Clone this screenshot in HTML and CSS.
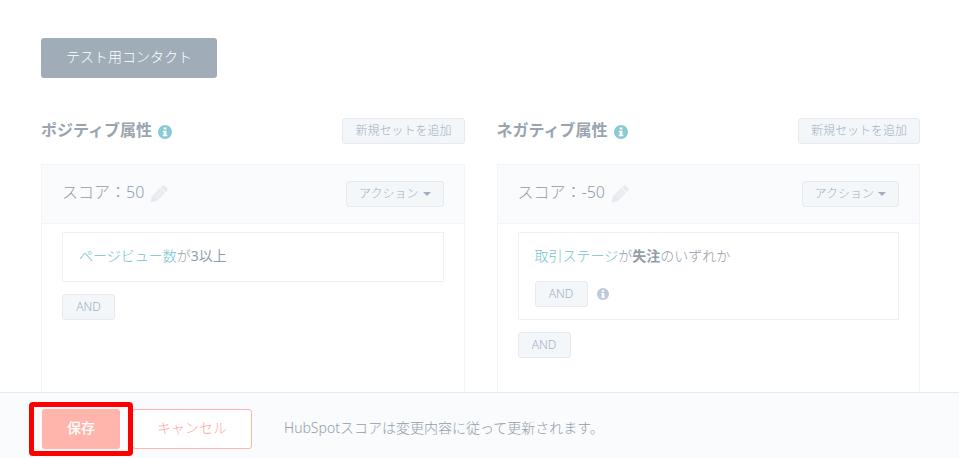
FILE: index.html
```
<!DOCTYPE html>
<html lang="ja">
<head>
<meta charset="utf-8">
<meta name="viewport" content="width=device-width, initial-scale=1">
<title>HubSpotスコア</title>
<link rel="stylesheet" href="styles.css">
</head>
<body>
<svg class="sprite" aria-hidden="true">
  <symbol id="info" viewBox="0 0 14 14">
    <circle cx="7" cy="7" r="7" fill="currentColor"/>
    <path d="M5.700 2.500h2.700v2.100H5.700zM4.900 5.700h3.500v4.100h.9v1.500H4.800V9.800h.9V7.200h-.8z" fill="#fff"/>
  </symbol>
  <symbol id="pencil" viewBox="0 0 18 18">
    <path d="M.5 17.500l1.300-6L10.200 3.100l4.700 4.700L6.500 16.200zM11 2.300l1.300-1.300a1.900 1.900 0 0 1 2.700 0l2 2a1.900 1.900 0 0 1 0 2.700L15.700 7z" fill="currentColor"/>
    <path d="M4.600 12.200l6.600-6.600M6 13.500l6.600-6.600" stroke="#f9fbfd" stroke-width=".6"/>
  </symbol>
</svg>
<main class="page">
  <button class="btn btn-dark" type="button">テスト用コンタクト</button>
  <div class="columns">
    <section>
      <div class="section-head">
        <h2>ポジティブ属性 <svg class="info"><use href="#info"/></svg></h2>
        <button class="btn btn-small" type="button">新規セットを追加</button>
      </div>
      <div class="card">
        <div class="card-head">
          <h3>スコア：50 <svg class="pencil"><use href="#pencil"/></svg></h3>
          <button class="btn btn-small btn-menu" type="button">アクション<span class="caret"></span></button>
        </div>
        <div class="card-body">
          <div class="rule">
            <p><a href="#">ページビュー数</a>が<span class="value">3以上</span></p>
          </div>
          <button class="btn btn-small" type="button">AND</button>
        </div>
      </div>
    </section>
    <section>
      <div class="section-head">
        <h2>ネガティブ属性 <svg class="info"><use href="#info"/></svg></h2>
        <button class="btn btn-small" type="button">新規セットを追加</button>
      </div>
      <div class="card">
        <div class="card-head">
          <h3>スコア：-50 <svg class="pencil"><use href="#pencil"/></svg></h3>
          <button class="btn btn-small btn-menu" type="button">アクション<span class="caret"></span></button>
        </div>
        <div class="card-body">
          <div class="rule">
            <p><a href="#">取引ステージ</a>が<strong>失注</strong>のいずれか</p>
            <div class="rule-add">
              <button class="btn btn-small" type="button">AND</button>
              <svg class="info info-muted"><use href="#info"/></svg>
            </div>
          </div>
          <button class="btn btn-small" type="button">AND</button>
        </div>
      </div>
    </section>
  </div>
</main>
<footer class="footer">
  <div class="highlight"><button class="btn btn-save" type="button">保存</button></div>
  <button class="btn btn-cancel" type="button">キャンセル</button>
  <p>HubSpotスコアは変更内容に従って更新されます。</p>
</footer>
</body>
</html>
```
FILE: styles.css
```
* {
  box-sizing: border-box;
}

body {
  margin: 0;
  height: 100vh;
  display: flex;
  flex-direction: column;
  overflow: hidden;
  background: #fff;
  color: #929da9;
  font: 300 14px/22px "Noto Sans", "Noto Sans CJK JP", sans-serif;
}

h2,
h3,
p {
  margin: 0;
}

p {
  padding-bottom: 2px;
}

a {
  color: #74c0ce;
  text-decoration: none;
}

.sprite {
  position: absolute;
  width: 0;
  height: 0;
}

.page {
  flex: 1;
  min-height: 0;
  overflow: hidden;
  display: flex;
  flex-direction: column;
  align-items: flex-start;
  gap: 40px;
  padding: 38px 39px 0 41px;
}

.btn {
  height: 40px;
  padding: 0 24px 2px;
  border: 1px solid transparent;
  border-radius: 3px;
  font: inherit;
  line-height: 20px;
  white-space: nowrap;
  cursor: pointer;
}

.btn-dark {
  flex: none;
  background: #a0acb8;
  color: #fff;
}

.btn-small {
  min-width: 53px;
  height: 26px;
  padding: 0 12px;
  border-color: #e4eaf0;
  background: #f3f7fa;
  color: #a0afc2;
  font-size: 12px;
}

.btn-menu {
  display: flex;
  align-items: center;
  gap: 4px;
}

.caret {
  border: 4px solid transparent;
  border-top-color: currentColor;
  border-bottom: 0;
}

.columns {
  flex: 1;
  align-self: stretch;
  display: grid;
  grid-template-columns: 1fr 1fr;
  gap: 32px;
}

.columns > section {
  display: flex;
  flex-direction: column;
}

.section-head,
.card-head {
  display: flex;
  align-items: center;
  justify-content: space-between;
}

.section-head {
  margin-bottom: 20px;
}

h2,
h3 {
  display: flex;
  align-items: center;
  gap: 6px;
  padding-bottom: 2px;
  font-size: 16px;
  line-height: 24px;
}

h2 {
  color: #99a4af;
  font-weight: 700;
}

h3 {
  padding-bottom: 4px;
  font-weight: 300;
}

.info {
  width: 14px;
  height: 14px;
  margin-top: 4px;
  color: #8ac9d6;
}

.pencil {
  width: 18px;
  height: 18px;
  margin-top: 4px;
  color: #e5eaf0;
}

.card {
  flex: 1;
  border: 1px solid #f1f5f9;
  border-bottom: 0;
}

.card-head {
  height: 59px;
  padding: 0 20px;
  border-bottom: 1px solid #f1f5f9;
  background: #f9fbfd;
}

.card-body {
  padding: 8px 20px;
}

.rule {
  margin-bottom: 12px;
  padding: 12px 16px;
  border: 1px solid #eef0f4;
}

.value {
  font-weight: 400;
}

strong {
  font-weight: 700;
}

.rule-add {
  display: flex;
  align-items: center;
  gap: 9px;
  margin-top: 12px;
}

.info-muted {
  width: 12px;
  height: 12px;
  margin-top: 0;
  color: #bccad9;
}

.footer {
  display: flex;
  align-items: center;
  gap: 12px;
  padding: 16px 42px 9px;
  border-top: 1px solid #e5e9f0;
  background: #f9fbfd;
}

.footer p {
  margin-left: 20px;
}

.highlight {
  position: relative;
}

.highlight::after {
  content: "";
  position: absolute;
  inset: -7px -13px;
  border: 5px solid #f00;
  border-radius: 4px;
  pointer-events: none;
}

.btn-save {
  display: block;
  background: #ffb5ac;
  color: #fff;
  font-weight: 500;
}

.btn-cancel {
  border-color: #ffb5ac;
  background: #fff;
  color: #ffa79c;
}
```
